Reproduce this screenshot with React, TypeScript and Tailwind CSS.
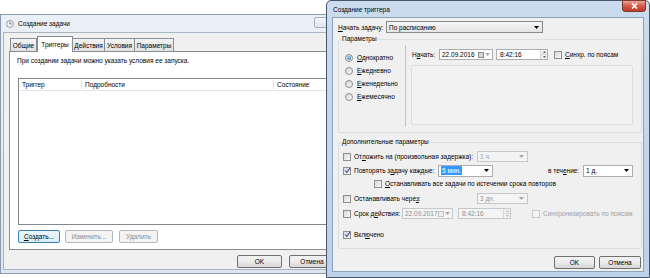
import React from "react";

type Kid = { children?: React.ReactNode };

function Check({ checked = false, disabled = false }: { checked?: boolean; disabled?: boolean }) {
  return (
    <span
      className={`relative flex h-[8px] w-[8px] shrink-0 items-center justify-center border ${
        disabled ? "border-[#c9c9c9] bg-[#f4f4f4]" : "border-[#8e8f8f] bg-linear-to-br from-[#d8d8d8] to-[#f9f9f9]"
      }`}
    >
      {checked && (
        <svg width="7" height="7" viewBox="0 0 7 7" className="absolute">
          <path d="M1.2 3.6 L2.9 5.4 L5.9 1.2" stroke="#3f5ea2" strokeWidth="1.2" fill="none" />
        </svg>
      )}
    </span>
  );
}

function Radio({ on = false }: { on?: boolean }) {
  return (
    <span className="flex h-[8px] w-[8px] shrink-0 items-center justify-center rounded-full border border-[#8e8f8f] bg-linear-to-br from-[#d4d4d4] to-[#fafafa]">
      {on && <span className="h-[4px] w-[4px] rounded-full bg-[radial-gradient(circle_at_35%_35%,#9ad8ff,#1d5fae)]" />}
    </span>
  );
}

function Arrow({ dim = false }: { dim?: boolean }) {
  return (
    <svg width="5" height="3" viewBox="0 0 5 3" className="shrink-0">
      <path d="M0 0 H5 L2.5 3 Z" fill={dim ? "#a8a8a8" : "#000"} />
    </svg>
  );
}

function Combo({
  className,
  text,
  disabled = false,
  hl = false,
  button = false,
}: {
  className: string;
  text: string;
  disabled?: boolean;
  hl?: boolean;
  button?: boolean;
}) {
  const look = disabled
    ? "border-[#c6c9cc] bg-[#f4f4f4] text-[#9a9a9a]"
    : button
    ? "border-[#8a8a8a] bg-linear-to-b from-[#f6f6f6] to-[#e4e4e4]"
    : "border-[#abadb3] bg-white";
  return (
    <div className={`flex shrink-0 items-center justify-between border pl-[2px] pr-[3px] ${look} ${className}`}>
      <span className={hl ? "bg-[#3399ff] px-[1px] text-white" : ""}>{text}</span>
      <Arrow dim={disabled} />
    </div>
  );
}

function Spin({ dim = false }: { dim?: boolean }) {
  return (
    <div className="flex h-full w-[7px] flex-col border-l border-[#d6d6d6]">
      <div className="flex flex-1 items-center justify-center border-b border-[#d6d6d6] bg-[#f2f2f2]">
        <svg width="3" height="2" viewBox="0 0 3 2">
          <path d="M0 2 H3 L1.5 0 Z" fill={dim ? "#b9b9b9" : "#666"} />
        </svg>
      </div>
      <div className="flex flex-1 items-center justify-center bg-[#f2f2f2]">
        <svg width="3" height="2" viewBox="0 0 3 2">
          <path d="M0 0 H3 L1.5 2 Z" fill={dim ? "#b9b9b9" : "#666"} />
        </svg>
      </div>
    </div>
  );
}

function CalIcon({ dim = false }: { dim?: boolean }) {
  return (
    <div className="flex items-center gap-[1px]">
      <span className={`h-[6px] w-[6px] border ${dim ? "border-[#c4c4c4] bg-[#ededed]" : "border-[#8a8a8a] bg-[#d4d9e0]"}`} />
      <Arrow dim />
    </div>
  );
}

function Btn({
  children,
  className,
  disabled = false,
  focus = false,
}: Kid & { className: string; disabled?: boolean; focus?: boolean }) {
  const look = disabled
    ? "border-[#b5b8bb] bg-[#f4f4f4] text-[#8c8c8c]"
    : focus
    ? "border-[#3c7fb1] bg-linear-to-b from-[#eaf6fd] to-[#d9eefa]"
    : "border-[#707070] bg-linear-to-b from-[#f2f2f2] via-[#ebebeb] to-[#d6d6d6]";
  return (
    <div className={`flex h-[13px] shrink-0 items-center justify-center rounded-[2px] border ${look} ${className}`}>
      {children}
    </div>
  );
}

function Group({ label, className, children }: Kid & { label: string; className: string }) {
  return (
    <div className={`relative rounded-[2px] border border-[#d5dfe5] ${className}`}>
      <span className="absolute -top-[6px] left-[2px] bg-[#f0f0f0] px-[1px] leading-[10px]">{label}</span>
      {children}
    </div>
  );
}

function TriggerDialog() {
  return (
    <div className="absolute left-[326px] top-0 flex h-[278px] w-[324px] flex-col rounded-t-[5px] border border-[#475669] bg-linear-to-b from-[#cbdcef] to-[#bcd1ea]">
      <div className="relative flex h-[16px] shrink-0 items-center pl-[6px]">
        Создание триггера
        <div className="absolute right-[3px] -top-[1px] flex h-[12px] w-[24px] items-center justify-center rounded-b-[3px] border border-[#83382e] bg-linear-to-b from-[#e9a597] via-[#d1584a] to-[#c53a28]">
          <svg width="7" height="6" viewBox="0 0 7 6">
            <path d="M1 0.5 L6 5.5 M6 0.5 L1 5.5" stroke="#fff" strokeWidth="1.6" />
          </svg>
        </div>
      </div>
      <div className="mx-[5px] mb-[5px] flex flex-1 flex-col border border-[#8ea2ba] bg-[#f0f0f0] pl-[5px]">
        <div className="mt-[3px] flex h-[12px] items-center">
          <span className="w-[48px] shrink-0">
            <u>Н</u>ачать задачу:
          </span>
          <Combo className="h-[12px] w-[157px]" text="По расписанию" button />
        </div>

        <Group label="Параметры" className="mt-[6px] flex h-[94px] w-[304px]">
          <div className="flex w-[66px] shrink-0 flex-col pl-[6px] pt-[11px]">
            {[
              ["О", "днократно", true],
              ["Е", "жедневно", false],
              ["Е", "женедельно", false],
              ["Е", "жемесячно", false],
            ].map(([u, rest, on]) => (
              <div key={(rest as string) + u} className="flex h-[13px] items-center gap-[4px]">
                <Radio on={on as boolean} />
                <span>
                  <u>{u as string}</u>
                  {rest as string}
                </span>
              </div>
            ))}
          </div>
          <div className="my-[5px] w-[2px] shrink-0 border-l border-[#c3c3c3] border-r-white" />
          <div className="flex flex-1 flex-col pl-[4px] pt-[9px]">
            <div className="flex h-[11px] items-center">
              <span className="w-[28px] shrink-0 pl-[1px]">
                Н<u>а</u>чать:
              </span>
              <div className="flex h-[11px] w-[54px] items-center justify-between border border-[#abadb3] bg-white pl-[2px] pr-[2px]">
                <span>22.09.2016</span>
                <CalIcon />
              </div>
              <div className="ml-[3px] flex h-[11px] w-[52px] items-center justify-between border border-[#abadb3] bg-white pl-[3px]">
                <span>8:42:16</span>
                <Spin />
              </div>
              <div className="ml-[6px] flex items-center gap-[3px]">
                <Check />
                <span>
                  <u>С</u>инхр. по поясам
                </span>
              </div>
            </div>
            <div className="mt-[5px] h-[60px] w-[222px] rounded-[2px] border border-[#dadde1] bg-[#f2f2f2]" />
          </div>
        </Group>

        <Group label="Дополнительные параметры" className="mt-[9px] flex h-[107px] w-[304px] flex-col pl-[4px] pt-[8px]">
          <div className="flex h-[11px] items-center">
            <Check />
            <span className="ml-[3px] w-[123px] shrink-0">
              От<u>л</u>ожить на (произвольная задержка):
            </span>
            <Combo className="h-[11px] w-[51px]" text="1 ч." disabled />
          </div>
          <div className="mt-[3px] flex h-[11px] items-center">
            <Check checked />
            <span className="ml-[3px] w-[84px] shrink-0">
              Повторять з<u>а</u>дачу каждые:
            </span>
            <Combo className="h-[12px] w-[55px]" text="5 мин." hl />
            <span className="ml-[55px] w-[35px] shrink-0">
              в теч<u>е</u>ние:
            </span>
            <Combo className="h-[12px] w-[50px]" text="1 д." />
          </div>
          <div className="mt-[2px] flex h-[11px] items-center pl-[31px]">
            <Check />
            <span className="ml-[3px]">
              <u>О</u>станавливать все задачи по истечении срока повторов
            </span>
          </div>
          <div className="mt-[4px] flex h-[11px] items-center">
            <Check />
            <span className="ml-[3px] w-[123px] shrink-0">
              Останавливать чере<u>з</u>:
            </span>
            <Combo className="h-[11px] w-[51px]" text="3 дн." disabled />
          </div>
          <div className="mt-[4px] flex h-[11px] items-center">
            <Check />
            <span className="ml-[3px] w-[48px] shrink-0">
              Срок д<u>е</u>йствия:
            </span>
            <div className="flex h-[11px] w-[51px] items-center justify-between border border-[#c6c9cc] bg-[#f4f4f4] pl-[2px] pr-[2px] text-[#8f8f8f]">
              <span>22.09.2017</span>
              <CalIcon dim />
            </div>
            <div className="ml-[5px] flex h-[11px] w-[53px] items-center justify-between border border-[#c6c9cc] bg-[#f4f4f4] pl-[3px] text-[#8f8f8f]">
              <span>8:42:16</span>
              <Spin dim />
            </div>
            <div className="ml-[21px] flex items-center gap-[3px] text-[#a0a0a0]">
              <Check disabled />
              <span>Синхронизировать по поясам</span>
            </div>
          </div>
          <div className="mt-[10px] flex h-[11px] items-center">
            <Check checked />
            <span className="ml-[3px]">
              Вкл<u>ю</u>чено
            </span>
          </div>
        </Group>

        <div className="mt-[7px] flex justify-end gap-[4px] pr-[2px]">
          <Btn className="w-[41px]">OK</Btn>
          <Btn className="w-[42px]">Отмена</Btn>
        </div>
      </div>
    </div>
  );
}

function TaskWindow() {
  const tabs = ["Общие", "Триггеры", "Действия", "Условия", "Параметры"];
  const widths = ["w-[27px]", "w-[36px]", "w-[33px]", "w-[31px]", "w-[40px]"];
  return (
    <div className="absolute left-0 top-[14px] flex h-[260px] w-[350px] flex-col border border-[#8c9aab] bg-linear-to-b from-[#eaf0f7] to-[#dde6f0]">
      <div className="relative flex h-[17px] shrink-0 items-center gap-[4px] pl-[5px]">
        <svg width="8" height="8" viewBox="0 0 8 8">
          <circle cx="4" cy="4" r="3.4" fill="#fff" stroke="#7a7f86" strokeWidth="0.8" />
          <path d="M4 1.8 V4 H5.8" stroke="#333" strokeWidth="0.7" fill="none" />
        </svg>
        <span>Создание задачи</span>
        <div className="absolute left-[313px] top-[2px] h-[11px] w-[24px] rounded-[2px] border border-[#a3afbd] bg-linear-to-b from-[#f3f6fa] to-[#dfe6ee]" />
      </div>
      <div className="mx-[2px] mb-[3px] flex flex-1 flex-col border border-[#a9b5c3] bg-[#f0f0f0] pl-[5px]">
        <div className="mt-[2px] flex h-[16px] items-end pl-[1px]">
          {tabs.map((t, i) =>
            i === 1 ? (
              <div
                key={t}
                className={`relative z-10 -mb-[1px] flex h-[16px] items-center justify-center border border-b-0 border-[#898c95] bg-white ${widths[i]}`}
              >
                {t}
              </div>
            ) : (
              <div
                key={t}
                className={`flex h-[13px] items-center justify-center border border-b-0 border-[#898c95] bg-linear-to-b from-[#f3f3f3] to-[#e2e2e2] ${widths[i]} ${
                  i === 0 ? "" : "-ml-[1px]"
                }`}
              >
                {t}
              </div>
            )
          )}
        </div>
        <div className="flex h-[199px] w-[340px] flex-col border border-[#898c95] bg-white pl-[7px] pt-[4px]">
          <div className="h-[9px] leading-[9px]">При создании задачи можно указать условия ее запуска.</div>
          <div className="ml-[1px] mt-[13px] flex h-[147px] flex-col border border-[#828790] bg-white">
            <div className="flex h-[12px] items-center border-b border-[#e5e5e5]">
              <span className="w-[63px] border-r border-[#e2e2e2] pl-[3px]">Триггер</span>
              <span className="w-[192px] border-r border-[#e2e2e2] pl-[3px]">Подробности</span>
              <span className="pl-[3px]">Состояние</span>
            </div>
          </div>
          <div className="ml-[1px] mt-[5px] flex gap-[5px]">
            <Btn className="w-[42px]" focus>
              <span>
                <u>С</u>оздать...
              </span>
            </Btn>
            <Btn className="w-[48px]" disabled>
              Изменить...
            </Btn>
            <Btn className="ml-[1px] w-[39px]" disabled>
              Удалить
            </Btn>
          </div>
        </div>
        <div className="mt-[5px] flex gap-[7px] pl-[228px]">
          <Btn className="w-[45px]">OK</Btn>
          <Btn className="w-[46px]">Отмена</Btn>
        </div>
      </div>
    </div>
  );
}

export default function App() {
  return (
    <div className="relative h-[278px] w-[650px] overflow-hidden bg-white font-['Liberation_Sans',Arial,sans-serif] text-[6.5px] leading-[9px] whitespace-nowrap text-black">
      <TaskWindow />
      <TriggerDialog />
    </div>
  );
}
